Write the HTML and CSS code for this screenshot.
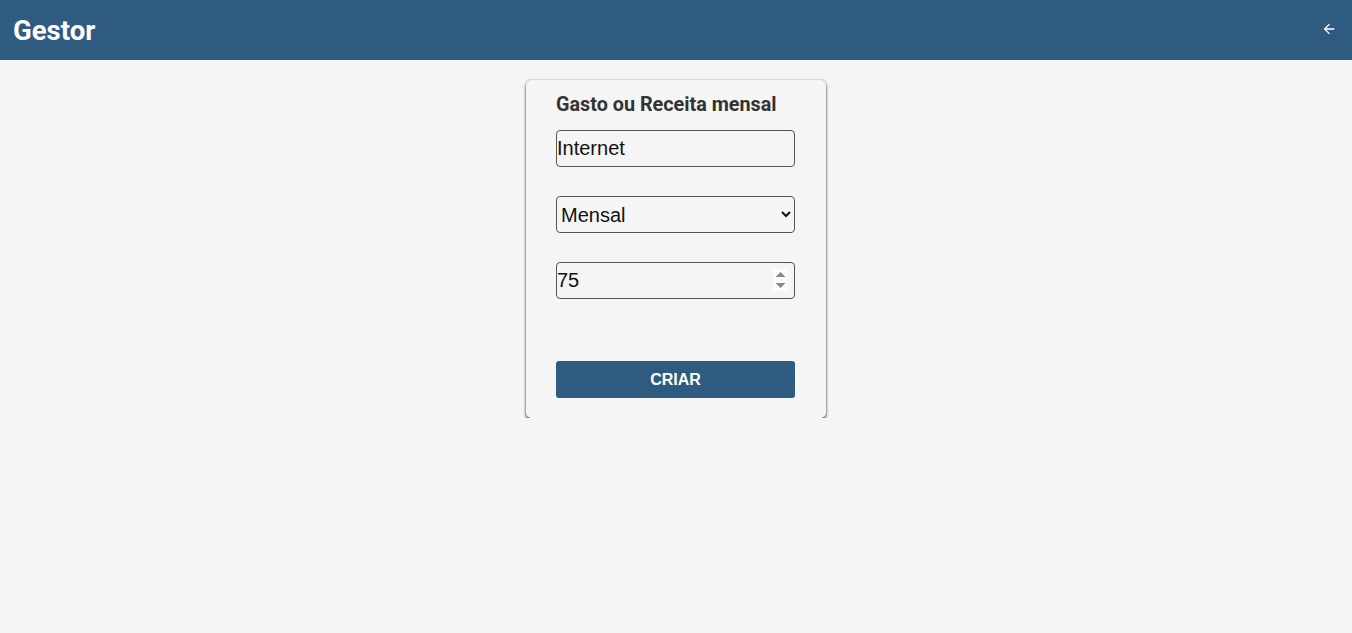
FILE: index.html
```html
<!DOCTYPE html>
<html lang="pt">
<head>
<meta charset="utf-8">
<title>Gestor</title>
<link rel="stylesheet" href="styles.css">
</head>
<body>
<header class="topbar">
  <h1 class="brand">Gestor</h1>
  <button class="back" aria-label="Voltar">
    <svg width="16" height="16" viewBox="0 0 24 24"><path d="M20 11H7.83l5.59-5.59L12 4l-8 8 8 8 1.41-1.41L7.83 13H20v-2z" fill="#ffffff"/></svg>
  </button>
</header>
<main class="content">
  <form class="card">
    <h2 class="card-title">Gasto ou Receita mensal</h2>
    <input class="field" type="text" value="Internet">
    <select class="field select">
      <option>Mensal</option>
      <option>Anual</option>
    </select>
    <input class="field" type="number" value="75" autofocus>
    <button type="button" class="submit">CRIAR</button>
  </form>
</main>
</body>
</html>
```
FILE: styles.css
```css
html, body {
  margin: 0;
  padding: 0;
  background: #f5f5f5;
  font-family: Roboto, "Liberation Sans", Arial, sans-serif;
}
.topbar {
  height: 60px;
  background: #2f5b80;
  display: flex;
  align-items: center;
  justify-content: space-between;
  padding: 0 15px 0 13px;
  box-sizing: border-box;
}
.brand {
  margin: 0;
  color: #ffffff;
  font-size: 27.5px;
  font-weight: 700;
  line-height: 1;
  padding-top: 1px;
}
.back {
  background: none;
  border: 0;
  padding: 0;
  width: 16px;
  height: 16px;
  display: flex;
  cursor: pointer;
  margin-top: -3px;
}
.content {
  display: flex;
  justify-content: center;
  padding-top: 20px;
}
.card {
  width: 300px;
  box-sizing: border-box;
  padding: 15px 30px 20px;
  background: #f5f5f5;
  border-radius: 5px;
  box-shadow: 0 2px 3px rgba(0,0,0,0.7), 0 0 2px rgba(0,0,0,0.35);
  display: flex;
  flex-direction: column;
}
.card-title {
  margin: 0 0 15px;
  font-size: 19.8px;
  font-weight: 700;
  line-height: 20px;
  color: #333333;
}
.field {
  width: 239px;
  height: 37px;
  box-sizing: border-box;
  border: 1px solid #555555;
  border-radius: 4px;
  background: #f5f5f5;
  font-family: "Liberation Sans", Arial, sans-serif;
  font-size: 20px;
  color: #111111;
  padding: 0 6px 0 0;
  margin: 0 0 29px;
  outline: none;
}
.field:focus {
  outline: none;
  border-color: #555555;
}
.field.select {
  padding-left: 0;
}
.field[type="number"] {
  margin-bottom: 62px;
}
.submit {
  width: 239px;
  height: 37px;
  border: 0;
  border-radius: 3px;
  background: #2f5b80;
  color: #ffffff;
  font-family: "Liberation Sans", Arial, sans-serif;
  font-size: 16px;
  font-weight: 700;
  cursor: pointer;
}
```
